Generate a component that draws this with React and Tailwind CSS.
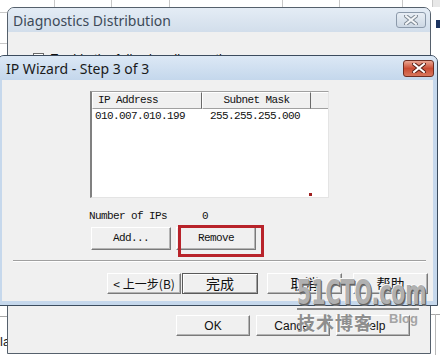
import React from 'react';

const mono = { fontFamily: '"Liberation Mono", "Noto Sans CJK SC", monospace' };
const cjk = { fontFamily: '"Noto Sans CJK SC", "Liberation Sans", sans-serif' };

// Classic raised push button
function Button({ children, className = '', isDefault = false, style }) {
  return (
    <div
      style={style}
      className={`flex items-center justify-center bg-[#f0f0f0] text-[#111] border ${
        isDefault
          ? 'border-[#5a5a5a] shadow-[inset_1px_1px_0_#fff,inset_-1px_-1px_0_#a0a0a0]'
          : 'border-t-white border-l-white border-r-[#7a7a7a] border-b-[#7a7a7a] shadow-[inset_-1px_-1px_0_#b4b4b4]'
      } ${className}`}
    >
      {children}
    </div>
  );
}

function CloseX({ stroke, fill }) {
  return (
    <svg width="14" height="10" viewBox="0 0 14 10">
      <path d="M2 1 L12 9 M12 1 L2 9" stroke={stroke} strokeWidth="4" strokeLinecap="square" />
      <path d="M2 1 L12 9 M12 1 L2 9" stroke={fill} strokeWidth="2" strokeLinecap="square" />
    </svg>
  );
}

// Back window: Diagnostics Distribution
function BackDialog() {
  return (
    <div className="absolute left-[7px] top-[7px] w-[424px] h-[347px] rounded-t-[7px] border border-[#55606c] bg-[#d9e4f0] flex flex-col overflow-hidden">
      <div className="h-[24px] flex items-center justify-between pl-[5px] pr-[4px] bg-gradient-to-b from-[#e4ecf5] to-[#d2deeb]">
        <span className="text-[14px] text-[#3d4a58]" style={{ fontFamily: '"Noto Sans", "Open Sans", sans-serif' }}>
          Diagnostics Distribution
        </span>
        <div className="w-[30px] h-[16px] rounded-[3px] border border-[#8c9aab] bg-gradient-to-b from-[#e8eef5] to-[#cdd8e4] flex items-center justify-center">
          <CloseX stroke="#7f8a96" fill="#f4f6f8" />
        </div>
      </div>
      <div className="flex-1 bg-[#f0f0f0] flex flex-col">
        <div className="flex items-center gap-[6px] ml-[25px] mt-[17px]">
          <div className="w-[11px] h-[11px] border border-[#6a6a6a] bg-white flex items-center justify-center text-[10px] leading-none">✓</div>
          <span className="text-[13px] text-[#111]" style={{ fontFamily: '"Liberation Sans", sans-serif' }}>
            Enable the following diagnostics
          </span>
        </div>
        <div className="flex-1" />
        <div className="flex justify-end gap-[6px] pr-[20px] mb-[17px] text-[12px]" style={{ fontFamily: '"Liberation Sans", sans-serif' }}>
          <Button className="w-[74px] h-[21px]">OK</Button>
          <Button className="w-[74px] h-[21px]">Cancel</Button>
          <Button className="w-[74px] h-[21px]">Help</Button>
        </div>
      </div>
    </div>
  );
}

// Front window: IP Wizard
function IpWizard() {
  return (
    <div className="absolute left-[-3px] top-[55px] w-[441px] h-[251px] rounded-t-[7px] border border-[#3c4c5e] bg-[#c6d8ec] flex flex-col overflow-hidden">
      <div className="h-[24px] flex items-center justify-between pl-[8px] pr-[3px] bg-gradient-to-b from-[#dce8f5] to-[#c4d7ec]">
        <span className="text-[14px] text-[#1a1a1a]" style={{ fontFamily: '"Noto Sans", "Open Sans", sans-serif' }}>
          IP Wizard - Step 3 of 3
        </span>
        <div className="w-[31px] h-[17px] rounded-[3px] border border-[#6e2d22] bg-gradient-to-b from-[#e9a592] via-[#c94b33] to-[#d8765c] flex items-center justify-center">
          <CloseX stroke="#5a2018" fill="#ffffff" />
        </div>
      </div>
      <div className="flex-1 mx-[4px] mb-[4px] bg-[#f0f0f0] flex flex-col text-[#111]">
        {/* list view */}
        <div className="ml-[88px] mt-[11px] w-[239px] h-[107px] border-l-2 border-t border-l-[#808080] border-t-[#a0a0a0] border-r border-b border-r-[#e4e4e4] border-b-[#e4e4e4] bg-white flex flex-col text-[11px] tracking-[-0.6px]" style={mono}>
          <div className="h-[17px] flex bg-[#f0f0f0]">
            <div className="w-[110px] flex items-center pl-[5px] border border-t-white border-l-white border-r-[#696969] border-b-[#a0a0a0]">IP Address</div>
            <div className="w-[109px] flex items-center justify-center border border-t-white border-l-white border-r-[#696969] border-b-[#a0a0a0]">Subnet Mask</div>
            <div className="flex-1 border-t border-t-white border-b border-b-[#a0a0a0]" />
          </div>
          <div className="flex h-[15px] items-center">
            <span className="w-[118px] pl-[3px]">010.007.010.199</span>
            <span>255.255.255.000</span>
          </div>
          <div className="flex-1 flex items-end justify-end pr-[16px] pb-[1px]">
            <div className="w-[3px] h-[3px] bg-[#a02020]" />
          </div>
        </div>

        {/* count */}
        <div className="ml-[87px] mt-[11px] h-[14px] flex items-center text-[11px] tracking-[-0.6px]" style={mono}>
          <span className="w-[113px]">Number of IPs</span>
          <span>0</span>
        </div>

        {/* add / remove */}
        <div className="ml-[89px] mt-[4px] flex gap-[5px] text-[11px] tracking-[-0.6px]" style={mono}>
          <Button className="w-[80px] h-[23px]">Add...</Button>
          <div className="relative">
            <Button className="w-[80px] h-[23px]">Remove</Button>
            <div className="absolute left-[2px] top-[-2px] w-[86px] h-[32px] border-[3px] border-[#b8232a]" />
          </div>
        </div>

        {/* separator */}
        <div className="ml-[11px] mt-[10px] w-[413px] h-[2px] border-t border-t-[#a0a0a0] border-b border-b-white" />

        {/* wizard buttons */}
        <div className="mt-[11px] flex text-[14px]" style={cjk}>
          <Button className="ml-[105px] w-[74px] h-[21px] text-[12px] gap-[3px]"><span>&lt;</span><span>上一步(B)</span></Button>
          <Button isDefault className="ml-[1px] w-[76px] h-[21px]">完成</Button>
          <Button className="ml-[9px] w-[75px] h-[21px]">取消</Button>
          <Button className="ml-[11px] w-[75px] h-[21px]">帮助</Button>
        </div>
      </div>
    </div>
  );
}

function Watermark() {
  return (
    <div className="absolute left-[297px] top-[279px] w-[125px] flex flex-col pointer-events-none">
      <div
        className="h-[28px] text-[33px] leading-[28px] font-black text-[#b0b0b0] origin-left scale-x-[0.62] whitespace-nowrap [text-shadow:1px_1px_0_#5e5e5e,2px_2px_0_#7a7a7a,-1px_-1px_0_#f8f8f8]"
        style={{ fontFamily: '"DejaVu Sans", "Liberation Sans", sans-serif' }}
      >
        51CTO.com
      </div>
      <div className="mt-[1px] h-[2px] w-[122px] bg-[#8c8c8c]" />
      <div className="flex items-end mt-[2px]">
        <span className="text-[18px] leading-[20px] font-bold text-[#8e8e8e] tracking-[1px] [text-shadow:1px_1px_0_#f6f6f6]" style={cjk}>
          技术博客
        </span>
        <span className="ml-[16px] mb-[7px] text-[13px] leading-[13px] font-bold text-[#a4a4a4]" style={{ fontFamily: '"Liberation Sans", sans-serif' }}>
          Blog
        </span>
      </div>
    </div>
  );
}

export default function App() {
  return (
    <div className="relative w-[440px] h-[355px] overflow-hidden bg-white">
      {/* desktop / grid behind the windows */}
      <div className="absolute inset-x-0 top-0 h-[7px] flex">
        {[55, 57, 58, 113, 57, 63, 30].map((w, i) => (
          <div key={i} className="h-full border-r border-[#c8c8c8]" style={{ width: w }} />
        ))}
        <div className="flex-1 bg-[#e8e8e8]" />
      </div>
      <div className="absolute left-0 top-[12px] w-[7px] h-px bg-[#c8c8c8]" />
      <div className="absolute left-0 top-[43px] w-[7px] h-px bg-[#c8c8c8]" />
      <div className="absolute right-0 top-[20px] w-[4px] h-[8px] bg-[#1c3460]" />
      <div className="absolute left-0 top-[316px] w-[7px] h-px bg-[#a8a8a8]" />
      <div className="absolute right-0 top-[314px] w-[9px] h-px bg-[#a8a8a8]" />
      <div className="absolute left-[435px] top-[314px] w-px h-[41px] bg-[#b8b8b8]" />
      <div className="absolute left-0 top-[332px] text-[13px] text-[#222]" style={{ fontFamily: '"Liberation Sans", sans-serif' }}>la</div>

      <BackDialog />
      <IpWizard />
      <Watermark />
    </div>
  );
}
